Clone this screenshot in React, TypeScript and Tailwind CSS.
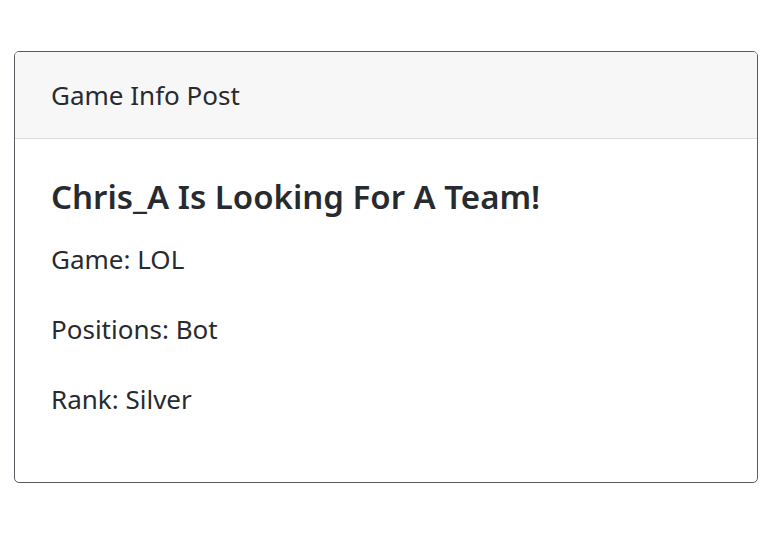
export default function App() {
  return (
    <div className="min-h-[541px] bg-white pt-[51px] px-[14px] font-['Noto_Sans',sans-serif] text-[#272b30]">
      <div className="w-[744px] h-[432px] rounded-[5px] border border-[#585c61] overflow-hidden">
        <div className="h-[87px] bg-[#f7f7f7] border-b border-[#dcdcdc] px-[36px] flex items-center">
          <span className="text-[26px]">Game Info Post</span>
        </div>
        <div className="px-[36px] pt-[38px]">
          <h2 className="text-[33px] font-semibold leading-[40px]">Chris_A Is Looking For A Team!</h2>
          <p className="mt-[24px] text-[26px] leading-[36px]">Game: LOL</p>
          <p className="mt-[34px] text-[26px] leading-[36px]">Positions: Bot</p>
          <p className="mt-[34px] text-[26px] leading-[36px]">Rank: Silver</p>
        </div>
      </div>
    </div>
  );
}
